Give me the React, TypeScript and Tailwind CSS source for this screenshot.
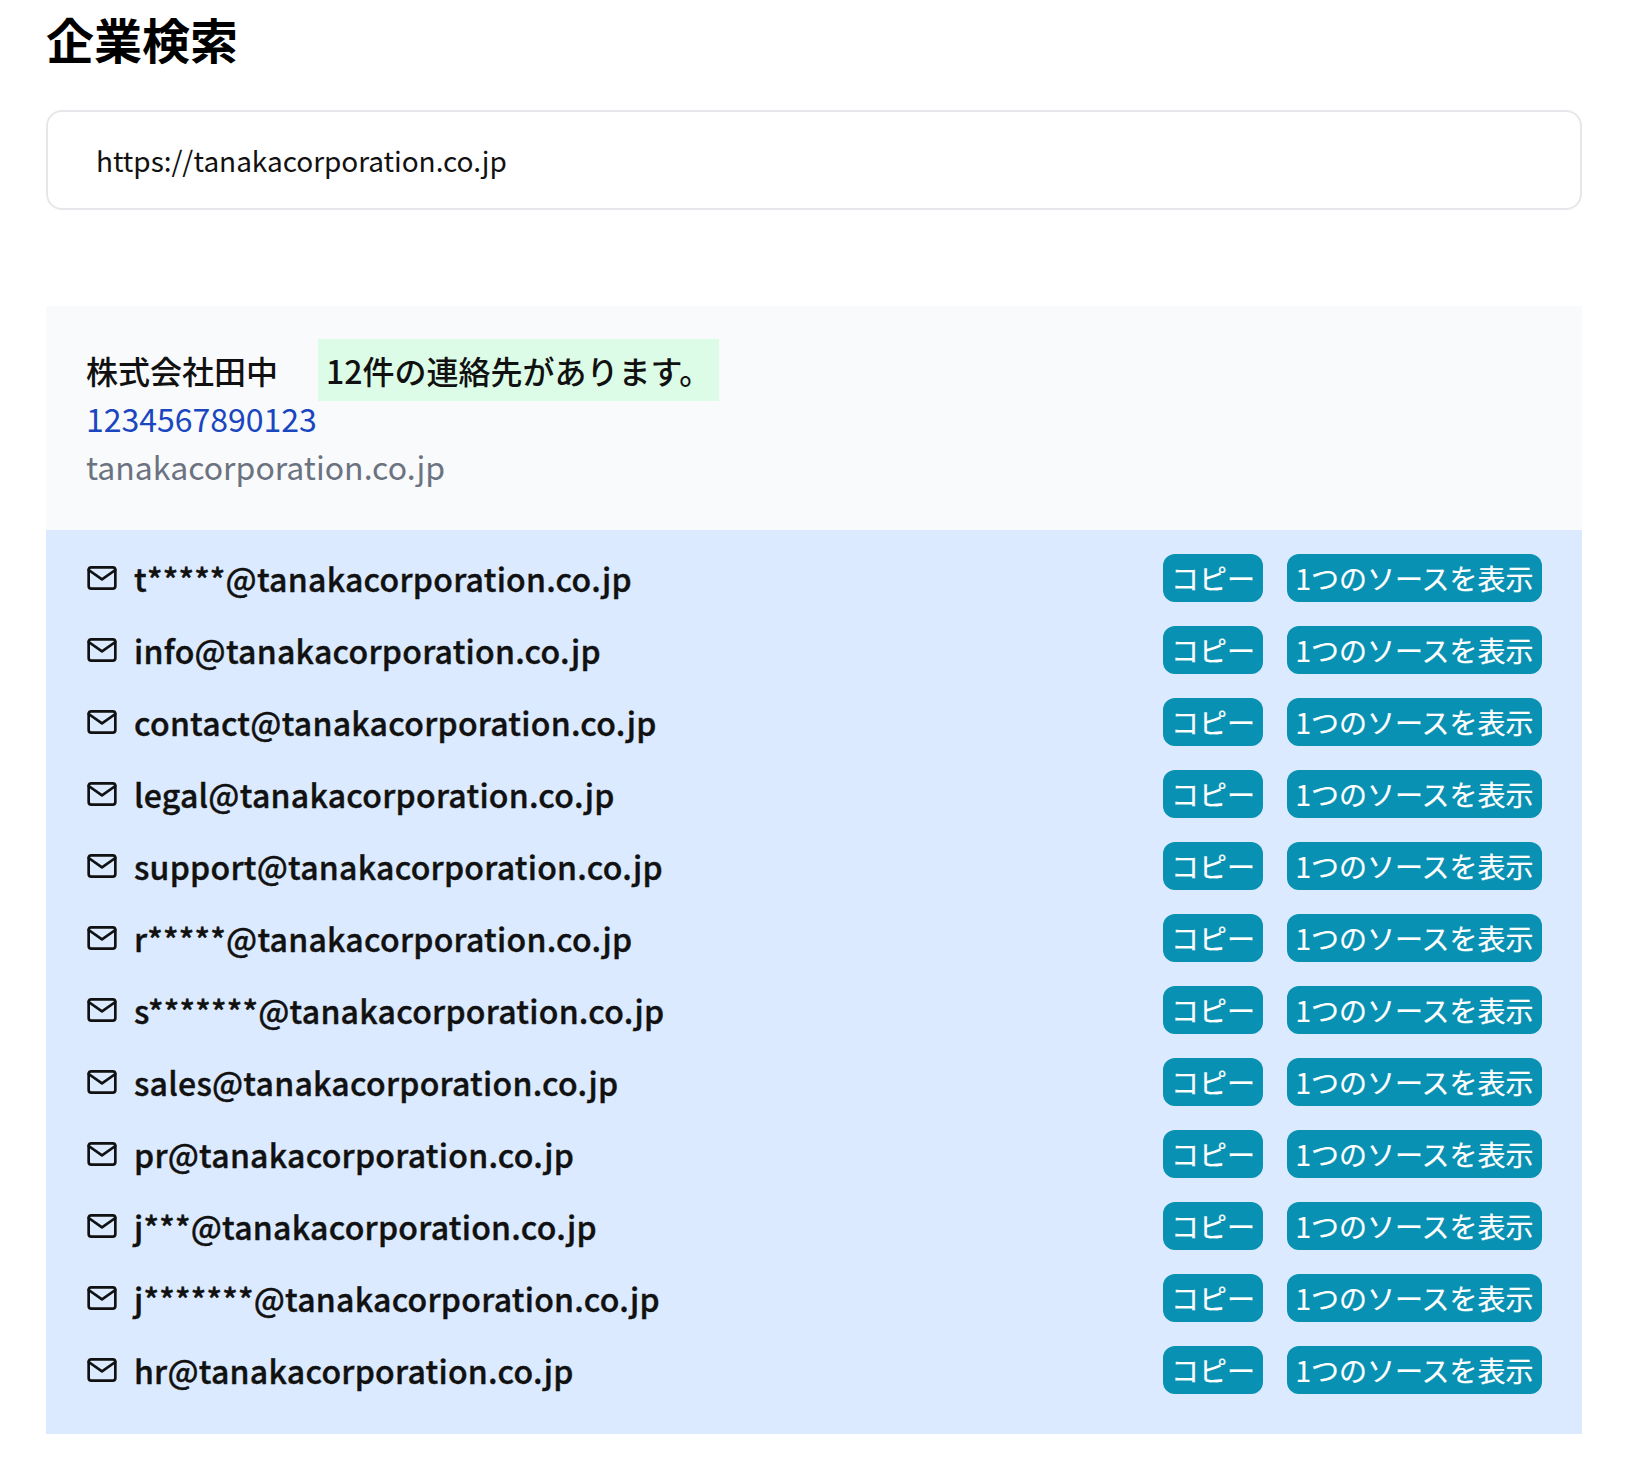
import React from "react";
import { FiMail } from "react-icons/fi";

const emails = [
  "t*****@tanakacorporation.co.jp",
  "info@tanakacorporation.co.jp",
  "contact@tanakacorporation.co.jp",
  "legal@tanakacorporation.co.jp",
  "support@tanakacorporation.co.jp",
  "r*****@tanakacorporation.co.jp",
  "s*******@tanakacorporation.co.jp",
  "sales@tanakacorporation.co.jp",
  "pr@tanakacorporation.co.jp",
  "j***@tanakacorporation.co.jp",
  "j*******@tanakacorporation.co.jp",
  "hr@tanakacorporation.co.jp",
];

export default function App() {
  return (
    <div className="min-h-[1474px] bg-white pl-[46px] pt-[6px] text-[#111111] font-['Noto_Sans_CJK_JP','Noto_Sans',sans-serif]">
      <div className="w-[1536px]">
        <h1 className="text-[48px] leading-[64px] font-bold text-black">企業検索</h1>
        <input
          readOnly
          value="https://tanakacorporation.co.jp"
          className="mt-10 block h-[100px] w-full rounded-2xl border-2 border-[#e5e7eb] bg-white px-[48px] text-[28px] tracking-[-0.05px] text-[#111111] outline-none"
        />
        <section className="mt-24">
          <div className="bg-[#f9fafb] p-10 text-[32px] leading-[48px]">
            <div className="font-medium">
              <span>株式会社田中</span>
              <span className="ml-10 bg-[#dcfce7] p-2">12件の連絡先があります。</span>
            </div>
            <div className="text-[#1a46c0]">1234567890123</div>
            <div className="text-[#6b7280]">tanakacorporation.co.jp</div>
          </div>
          <ul className="flex flex-col gap-6 bg-[#dbeafe] px-10 pt-6 pb-10">
            {emails.map((email, i) => (
              <li key={i} className="flex h-12 items-center">
                <FiMail className="h-8 w-8 shrink-0" />
                <span className="ml-4 text-[32px] leading-[48px] font-medium tracking-[0.25px] [-webkit-text-stroke:0.4px]">{email}</span>
                <button className="ml-auto h-12 w-[100px] rounded-xl bg-[#0891b2] px-2 text-[28px] leading-10 text-white [-webkit-text-stroke:0.2px]">コピー</button>
                <button className="ml-6 h-12 w-[255px] rounded-xl bg-[#0891b2] px-2 text-[28px] leading-10 text-white [-webkit-text-stroke:0.2px]">1つのソースを表示</button>
              </li>
            ))}
          </ul>
        </section>
      </div>
    </div>
  );
}
